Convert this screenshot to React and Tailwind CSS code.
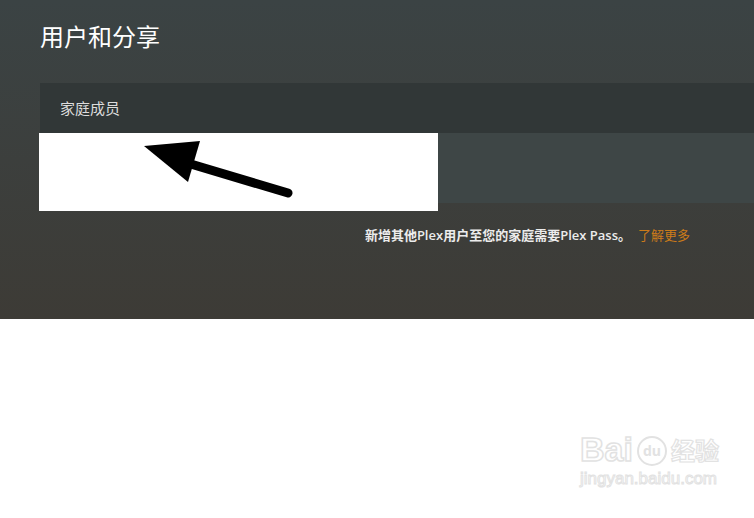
import React from "react";

export default function App() {
  const font = { fontFamily: '"Open Sans", "Noto Sans CJK SC", sans-serif' };
  return (
    <div className="w-[754px] h-[518px] bg-white overflow-hidden relative" style={font}>
      <div className="h-[319px] bg-gradient-to-b from-[#3b4344] to-[#3d3b36] pl-10 pt-[22px] relative">
        <h1 className="text-[24px] leading-[30px] text-white font-normal">用户和分享</h1>
        <div className="mt-[31px] h-[50px] bg-[#313737] flex items-center pl-5">
          <span className="text-[15px] text-[#dcdcdc]">家庭成员</span>
        </div>
        <div className="h-[70px] bg-[#3e4646]"></div>
        <div className="flex justify-end pr-[64px] mt-[23px] text-[13px] leading-[18px]">
          <span className="text-[#ececec] font-semibold">新增其他Plex用户至您的家庭需要Plex Pass。</span>
          <span className="text-[#cc7b19] ml-[7px]">了解更多</span>
        </div>
        <div className="absolute left-[39px] top-[133px] w-[399px] h-[78px] bg-white">
          <svg width="399" height="78" viewBox="0 0 399 78" className="block">
            <line x1="135" y1="26" x2="249" y2="60" stroke="black" strokeWidth="9" strokeLinecap="round" />
            <polygon points="105,13 161,8 149,49" fill="black" />
          </svg>
        </div>
      </div>
      <div className="absolute left-[580px] top-[432px] text-[#e8e8e8] select-none">
        <div className="flex items-end gap-1">
          <span className="text-[34px] leading-[34px] font-bold" style={{ fontFamily: '"Liberation Sans", sans-serif', color: "transparent", WebkitTextStroke: "1.5px #e2e2e2" }}>Bai</span>
          <span className="w-[30px] h-[30px] rounded-full border-2 border-[#e2e2e2] text-[14px] leading-[26px] text-center text-[#e2e2e2] font-bold">du</span>
          <span className="text-[24px] leading-[30px] font-bold" style={{ color: "transparent", WebkitTextStroke: "1.2px #e2e2e2" }}>经验</span>
        </div>
        <div className="text-[17px] leading-[22px] mt-[2px]" style={{ fontFamily: '"Liberation Sans", sans-serif', color: "transparent", WebkitTextStroke: "1px #e2e2e2" }}>jingyan.baidu.com</div>
      </div>
    </div>
  );
}
